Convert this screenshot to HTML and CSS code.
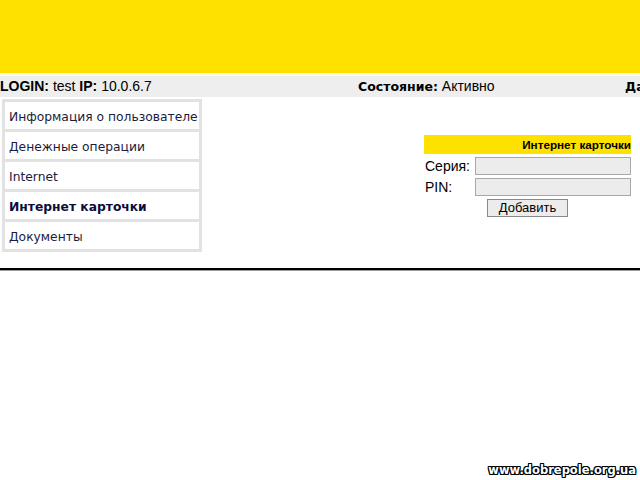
FILE: index.html
```html
<!DOCTYPE html>
<html lang="ru">

<head>
  <meta charset="UTF-8">
  <title>Интернет карточки</title>
  <link rel="stylesheet" href="styles.css">
</head>

<body>
  <div class="header"></div>
  <div class="status">
    <div class="statusCell login"><b>LOGIN:</b> test <b>IP:</b> 10.0.6.7</div>
    <div class="statusCell state"><b class="wide">Состояние:</b> Активно</div>
    <div class="statusCell date"><b class="wide">Дата:</b></div>
  </div>
  <div class="main">
    <div class="menu">
      <div class="menuItem">Информация о пользователе</div>
      <div class="menuItem">Денежные операции</div>
      <div class="menuItem">Internet</div>
      <div class="menuItem active">Интернет карточки</div>
      <div class="menuItem">Документы</div>
    </div>
    <div class="content">
      <div class="cardForm">
        <div class="formTitle">Интернет карточки</div>
        <div class="formRow">
          <span class="label">Серия:</span>
          <input class="input" type="text">
        </div>
        <div class="formRow">
          <span class="label">PIN:</span>
          <input class="input" type="text">
        </div>
        <div class="formButtons">
          <div class="button">Добавить</div>
        </div>
      </div>
    </div>
  </div>
  <div class="rule"></div>
  <div class="watermark">www.dobrepole.org.ua</div>
</body>

</html>
```

FILE: styles.css
```css
html,
body {
  margin: 0;
  padding: 0;
}

body {
  font-family: "Liberation Sans", Arial, sans-serif;
  font-size: 13px;
  color: #000;
  overflow: hidden;
  width: 640px;
  height: 480px;
}

.header {
  height: 73px;
  background-color: #ffe100;
  border-bottom: 3px solid #fffbe0;
}

.status {
  display: flex;
  width: 900px;
  height: 21px;
  line-height: 21px;
  background-color: #eeeeee;
  font-size: 14px;
  white-space: nowrap;
}

.statusCell {
  box-sizing: border-box;
}

.login {
  width: 358px;
}

.state {
  width: 267px;
}

.wide {
  font-family: "DejaVu Sans", Verdana, sans-serif;
  font-size: 12.5px;
}

.main {
  display: flex;
  padding: 2px 0 0 2px;
}

.menu {
  width: 194px;
  border: 3px solid #e2e2e2;
}

.menuItem {
  height: 24px;
  line-height: 24px;
  padding: 3px 0 0 4px;
  font-family: "DejaVu Sans", Verdana, sans-serif;
  font-size: 12.3px;
  color: #1c1c40;
  white-space: nowrap;
}

.menuItem + .menuItem {
  border-top: 3px solid #e2e2e2;
}

.menuItem.active {
  font-weight: bold;
  color: #0c0c3a;
}

.content {
  flex: 1;
  padding: 36px 0 0 222px;
}

.cardForm {
  width: 207px;
}

.formTitle {
  height: 19px;
  line-height: 19px;
  background-color: #ffe100;
  text-align: right;
  font-size: 11.7px;
  font-weight: bold;
}

.formRow {
  display: flex;
  align-items: center;
  margin-top: 3px;
}

.label {
  width: 50px;
  padding-left: 1px;
  font-size: 14px;
}

.input {
  box-sizing: border-box;
  width: 156px;
  height: 18px;
  margin: 0;
  border: 1px solid #a8a8a8;
  background-color: #ececec;
}

.formButtons {
  padding: 3px 0 0 63px;
}

.button {
  width: 79px;
  height: 16px;
  line-height: 16px;
  text-align: center;
  border: 1px solid #8a8a8a;
  background-color: #ececec;
  font-size: 13px;
}

.rule {
  margin-top: 16px;
  height: 2px;
  background-color: #000;
  border-bottom: 1px solid #9a9a9a;
}

.watermark {
  position: absolute;
  right: 4px;
  bottom: 3px;
  font-family: "DejaVu Sans", Verdana, sans-serif;
  font-size: 11.5px;
  font-weight: bold;
  color: #fff;
  text-shadow: 1px 0 0 #000, -1px 0 0 #000, 0 1px 0 #000, 0 -1px 0 #000, 1px 1px 0 #000, -1px -1px 0 #000, 1px -1px 0 #000, -1px 1px 0 #000;
}
```
